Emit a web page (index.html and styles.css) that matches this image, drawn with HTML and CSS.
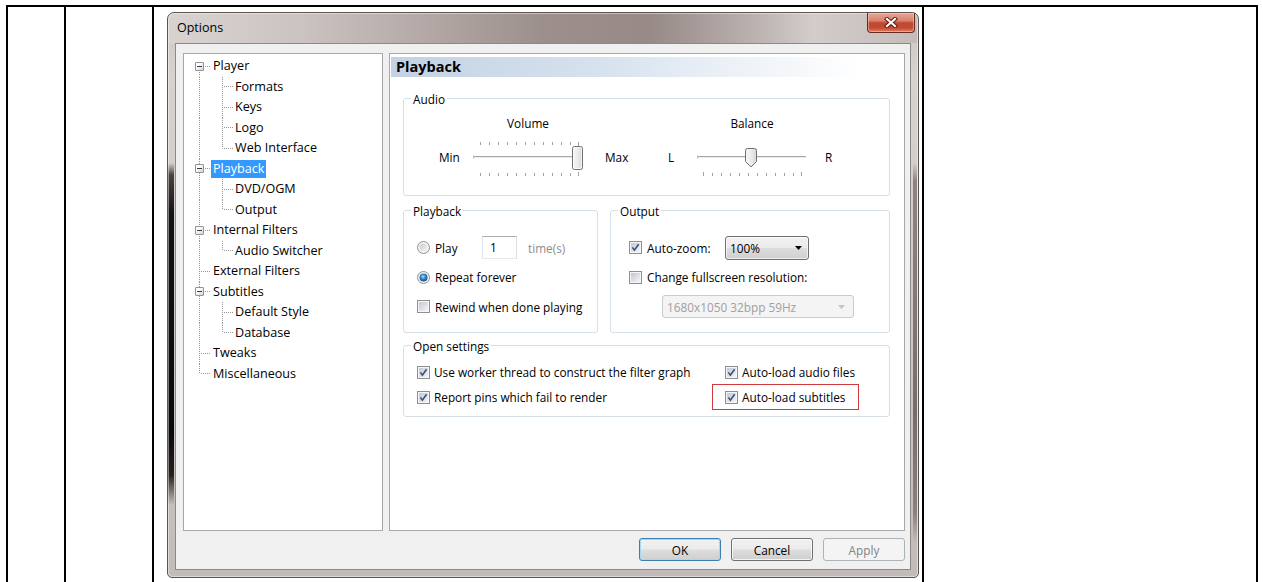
FILE: index.html
```html
<!DOCTYPE html>
<html lang="en">
<head>
<meta charset="utf-8">
<title>Options</title>
<link rel="stylesheet" href="styles.css">
</head>
<body>
<svg class="defs" width="0" height="0" aria-hidden="true">
  <defs>
    <linearGradient id="chkIn" x1="0" y1="0" x2="1" y2="1">
      <stop offset="0" stop-color="#c3c8d1"/>
      <stop offset="1" stop-color="#f4f5f7"/>
    </linearGradient>
    <linearGradient id="radIn" x1="0" y1="0" x2="1" y2="1">
      <stop offset="0" stop-color="#c9cbce"/>
      <stop offset="1" stop-color="#f6f6f6"/>
    </linearGradient>
    <radialGradient id="radDot" cx="0.45" cy="0.4" r="0.6">
      <stop offset="0" stop-color="#a9def9"/>
      <stop offset="0.55" stop-color="#2d7fc4"/>
      <stop offset="1" stop-color="#154c88"/>
    </radialGradient>
    <linearGradient id="thumbFill" x1="0" y1="0" x2="1" y2="0">
      <stop offset="0" stop-color="#f7f7f7"/>
      <stop offset="0.5" stop-color="#ececec"/>
      <stop offset="1" stop-color="#d6d6d6"/>
    </linearGradient>
  </defs>
</svg>

<table class="sheet">
  <tr>
    <td class="c1"></td>
    <td class="c2"></td>
    <td class="c3">
      <div class="window">
        <div class="titlebar">
          <span class="title">Options</span>
          <span class="close">
            <svg width="14" height="11" viewBox="0 0 14 11">
              <path d="M3 2L11 9M11 2L3 9" stroke="#5a1d12" stroke-width="4.2" stroke-linecap="square"/>
              <path d="M3 2L11 9M11 2L3 9" stroke="#fff" stroke-width="2.2" stroke-linecap="square"/>
            </svg>
          </span>
        </div>

        <div class="client">
          <div class="panes">
            <div class="tree">
              <div class="node"><span class="g0 exp first"><span class="box"></span></span><span class="lbl">Player</span></div>
              <div class="node"><span class="g0 pass"></span><span class="g1 tee"></span><span class="lbl">Formats</span></div>
              <div class="node"><span class="g0 pass"></span><span class="g1 tee"></span><span class="lbl">Keys</span></div>
              <div class="node"><span class="g0 pass"></span><span class="g1 tee"></span><span class="lbl">Logo</span></div>
              <div class="node"><span class="g0 pass"></span><span class="g1 last"></span><span class="lbl">Web Interface</span></div>
              <div class="node"><span class="g0 exp"><span class="box"></span></span><span class="lbl sel">Playback</span></div>
              <div class="node"><span class="g0 pass"></span><span class="g1 tee"></span><span class="lbl">DVD/OGM</span></div>
              <div class="node"><span class="g0 pass"></span><span class="g1 last"></span><span class="lbl">Output</span></div>
              <div class="node"><span class="g0 exp"><span class="box"></span></span><span class="lbl">Internal Filters</span></div>
              <div class="node"><span class="g0 pass"></span><span class="g1 last"></span><span class="lbl">Audio Switcher</span></div>
              <div class="node"><span class="g0 tee"></span><span class="lbl">External Filters</span></div>
              <div class="node"><span class="g0 exp"><span class="box"></span></span><span class="lbl">Subtitles</span></div>
              <div class="node"><span class="g0 pass"></span><span class="g1 tee"></span><span class="lbl">Default Style</span></div>
              <div class="node"><span class="g0 pass"></span><span class="g1 last"></span><span class="lbl">Database</span></div>
              <div class="node"><span class="g0 tee"></span><span class="lbl">Tweaks</span></div>
              <div class="node"><span class="g0 last"></span><span class="lbl">Miscellaneous</span></div>
            </div>

            <div class="page">
              <div class="page-head">Playback</div>

              <div class="group audio">
                <div class="group-title">Audio</div>
                <div class="audio-body">
                  <span class="ah vol">Volume</span>
                  <span class="ah bal">Balance</span>
                  <span class="at at-min">Min</span>
                  <svg class="slider s-vol" width="110" height="40" viewBox="0 0 110 40">
                    <g stroke="#a3a3a3" stroke-width="1">
                      <path d="M7.5 5v3M16.5 5v3M25.5 5v3M34.5 5v3M43.5 5v3M52.5 5v3M61.5 5v3M70.5 5v3M79.5 5v3M88.5 5v3M97.5 5v3M105.5 5v4"/>
                      <path d="M7.5 36v3M16.5 36v3M25.5 36v3M34.5 36v3M43.5 36v3M52.5 36v3M61.5 36v3M70.5 36v3M79.5 36v3M88.5 36v3M97.5 36v3M105.5 35v4"/>
                    </g>
                    <path d="M0 19.5H104" stroke="#a9a9a9"/>
                    <path d="M0 20.5H104" stroke="#e9e9e9"/>
                    <path d="M0.5 18.5v3" stroke="#b5b5b5"/>
                    <rect x="99.5" y="9.5" width="10" height="23" rx="2" fill="url(#thumbFill)" stroke="#707070"/>
                    <rect x="100.5" y="10.5" width="8" height="21" rx="1" fill="none" stroke="#fff" stroke-opacity=".7"/>
                  </svg>
                  <span class="at at-max">Max</span>
                  <span class="at at-l">L</span>
                  <svg class="slider s-bal" width="110" height="40" viewBox="0 0 110 40">
                    <path d="M0 19.5H109" stroke="#a9a9a9"/>
                    <path d="M0 20.5H109" stroke="#e9e9e9"/>
                    <path d="M0.5 18.5v3" stroke="#b5b5b5"/>
                    <g stroke="#a3a3a3" stroke-width="1">
                      <path d="M6.5 35v4M15.5 36v3M24.5 36v3M33.5 36v3M42.5 36v3M51.5 36v3M60.5 36v3M69.5 36v3M78.5 36v3M87.5 36v3M96.5 36v3M104.5 35v4"/>
                    </g>
                    <path d="M48.5 13.5a2 2 0 0 1 2-2h7a2 2 0 0 1 2 2v11l-5.5 5.5l-5.5-5.5z" fill="url(#thumbFill)" stroke="#707070"/>
                  </svg>
                  <span class="at at-r">R</span>
                </div>
              </div>

              <div class="split">
                <div class="group pb">
                  <div class="group-title">Playback</div>
                  <div class="rows">
                    <div class="row">
                      <svg class="rad" width="13" height="13" viewBox="0 0 13 13"><circle cx="6.5" cy="6.5" r="6" fill="#f4f4f4" stroke="#8e8f8f"/><circle cx="6.5" cy="6.5" r="4" fill="url(#radIn)"/></svg>
                      <span class="play-lbl">Play</span>
                      <span class="num">1</span>
                      <span class="muted times">time(s)</span>
                    </div>
                    <div class="row">
                      <svg class="rad" width="13" height="13" viewBox="0 0 13 13"><circle cx="6.5" cy="6.5" r="6" fill="#f4f4f4" stroke="#8e8f8f"/><circle cx="6.5" cy="6.5" r="4" fill="url(#radDot)"/></svg>
                      <span>Repeat forever</span>
                    </div>
                    <div class="row">
                      <svg class="cb" width="13" height="13" viewBox="0 0 13 13"><rect x=".5" y=".5" width="12" height="12" fill="#f6f6f6" stroke="#8e8f8f"/><rect x="2" y="2" width="9" height="9" fill="url(#chkIn)"/></svg>
                      <span>Rewind when done playing</span>
                    </div>
                  </div>
                </div>

                <div class="group out">
                  <div class="group-title">Output</div>
                  <div class="rows">
                    <div class="row">
                      <svg class="cb" width="13" height="13" viewBox="0 0 13 13"><rect x=".5" y=".5" width="12" height="12" fill="#f6f6f6" stroke="#8e8f8f"/><rect x="2" y="2" width="9" height="9" fill="url(#chkIn)"/><path d="M3.4 6.4l2 2.8 4.2-6" fill="none" stroke="#3b4f82" stroke-width="1.6"/></svg>
                      <span class="zoom-lbl">Auto-zoom:</span>
                      <span class="combo">100%<svg width="7" height="4" viewBox="0 0 7 4"><path d="M0 0h7L3.5 4z" fill="#000"/></svg></span>
                    </div>
                    <div class="row">
                      <svg class="cb" width="13" height="13" viewBox="0 0 13 13"><rect x=".5" y=".5" width="12" height="12" fill="#f6f6f6" stroke="#8e8f8f"/><rect x="2" y="2" width="9" height="9" fill="url(#chkIn)"/></svg>
                      <span>Change fullscreen resolution:</span>
                    </div>
                    <div class="row">
                      <span class="combo off">1680x1050 32bpp 59Hz<svg width="7" height="4" viewBox="0 0 7 4"><path d="M0 0h7L3.5 4z" fill="#c4c4c4"/></svg></span>
                    </div>
                  </div>
                </div>
              </div>

              <div class="group open">
                <div class="group-title">Open settings</div>
                <div class="orows">
                  <div class="orow">
                    <span class="ocell">
                      <svg class="cb" width="13" height="13" viewBox="0 0 13 13"><rect x=".5" y=".5" width="12" height="12" fill="#f6f6f6" stroke="#8e8f8f"/><rect x="2" y="2" width="9" height="9" fill="url(#chkIn)"/><path d="M3.4 6.4l2 2.8 4.2-6" fill="none" stroke="#3b4f82" stroke-width="1.6"/></svg>
                      <span>Use worker thread to construct the filter graph</span>
                    </span>
                    <span class="ocell">
                      <svg class="cb" width="13" height="13" viewBox="0 0 13 13"><rect x=".5" y=".5" width="12" height="12" fill="#f6f6f6" stroke="#8e8f8f"/><rect x="2" y="2" width="9" height="9" fill="url(#chkIn)"/><path d="M3.4 6.4l2 2.8 4.2-6" fill="none" stroke="#3b4f82" stroke-width="1.6"/></svg>
                      <span>Auto-load audio files</span>
                    </span>
                  </div>
                  <div class="orow">
                    <span class="ocell">
                      <svg class="cb" width="13" height="13" viewBox="0 0 13 13"><rect x=".5" y=".5" width="12" height="12" fill="#f6f6f6" stroke="#8e8f8f"/><rect x="2" y="2" width="9" height="9" fill="url(#chkIn)"/><path d="M3.4 6.4l2 2.8 4.2-6" fill="none" stroke="#3b4f82" stroke-width="1.6"/></svg>
                      <span>Report pins which fail to render</span>
                    </span>
                    <span class="ocell mark">
                      <svg class="cb" width="13" height="13" viewBox="0 0 13 13"><rect x=".5" y=".5" width="12" height="12" fill="#f6f6f6" stroke="#8e8f8f"/><rect x="2" y="2" width="9" height="9" fill="url(#chkIn)"/><path d="M3.4 6.4l2 2.8 4.2-6" fill="none" stroke="#3b4f82" stroke-width="1.6"/></svg>
                      <span>Auto-load subtitles</span>
                    </span>
                  </div>
                </div>
              </div>
            </div>
          </div>

          <div class="buttons">
            <button class="btn default" type="button">OK</button>
            <button class="btn" type="button">Cancel</button>
            <button class="btn disabled" type="button" disabled>Apply</button>
          </div>
        </div>
      </div>
    </td>
    <td class="c4"></td>
  </tr>
</table>
</body>
</html>
```

FILE: styles.css
```css
html, body {
  margin: 0;
  padding: 0;
  background: #fff;
  overflow: hidden;
}

body {
  font-family: "Open Sans", "Noto Sans", "Liberation Sans", sans-serif;
  font-size: 11.8px;
  color: #000;
}

.defs {
  display: block;
  width: 0;
  height: 0;
  overflow: hidden;
}

/* outer layout table */
.sheet {
  border-collapse: separate;
  border-spacing: 0;
  table-layout: fixed;
  width: 1252px;
  margin: 5px 0 0 6px;
  border-top: 2px solid #000;
  border-left: 2px solid #000;
}

.sheet td {
  box-sizing: border-box;
  border-right: 2px solid #000;
  padding: 0;
  height: 575px;
  vertical-align: top;
}

.c1 { width: 58px; }
.c2 { width: 88px; }
.c3 { width: 770px; padding: 5px 0 0 13px !important; }
.c4 { width: 334px; }

/* dialog window frame */
.window {
  width: 752px;
  height: 566px;
  box-sizing: border-box;
  border: 1px solid #5d5452;
  border-radius: 7px 7px 5px 5px;
  padding: 0 7px 7px;
  display: flex;
  flex-direction: column;
  box-shadow: inset 0 0 0 1px rgba(255, 255, 255, .45);
  background:
    linear-gradient(to bottom, rgba(40, 34, 34, 0) 150px, #4a4242 162px, #141414 200px, #0a0a0a 420px, #262020 462px, rgba(40, 34, 34, 0) 492px) left top / 6px 100% no-repeat,
    linear-gradient(to bottom, rgba(130, 120, 118, 0) 150px, #8e8482 168px, #776c6a 400px, #8a807e 500px, rgba(130, 120, 118, 0) 530px) right 1px top / 4px 100% no-repeat,
    linear-gradient(to right, #d8d3d1 0%, #cbc3c1 18%, #b4a9a6 34%, #9c8f8c 50%, #968986 64%, #b5aba9 76%, #d2ccca 86%, #c4bcba 100%) left top / 100% 30px no-repeat,
    linear-gradient(to bottom, #cbc4c2 0, #d7d2d0 60px, #cfc9c7 300px, #c2bbb9 100%);
}

.titlebar {
  height: 30px;
  flex: none;
  display: flex;
  justify-content: space-between;
  align-items: flex-start;
}

.title {
  margin-left: 2px;
  line-height: 30px;
  font-size: 12.5px;
  color: #000;
}

.close {
  width: 48px;
  height: 20px;
  box-sizing: border-box;
  margin-right: -4px;
  border: 1px solid #6b2a20;
  border-top: none;
  border-radius: 0 0 4px 4px;
  display: flex;
  align-items: center;
  justify-content: center;
  background: linear-gradient(to bottom, #e6a595 0%, #d88470 40%, #c4472f 52%, #c34a31 78%, #d9826a 100%);
  box-shadow: inset 0 0 0 1px rgba(255, 220, 210, .45);
}

/* client area */
.client {
  flex: 1;
  border: 1px solid #8f8986;
  background: #f0f0f0;
  padding: 9px 5px 8px 7px;
  display: flex;
  flex-direction: column;
  gap: 7px;
}

.panes {
  display: flex;
  gap: 6px;
  height: 478px;
}

/* tree */
.tree {
  width: 200px;
  flex: none;
  box-sizing: border-box;
  border: 1px solid #a7a7a7;
  background: #fff;
  padding-top: 2px;
  font-size: 12.6px;
  --vd: repeating-linear-gradient(to bottom, #959595 0 1px, transparent 1px 2px);
  --hd: repeating-linear-gradient(to right, #959595 0 1px, transparent 1px 2px);
}

.node {
  display: flex;
  align-items: center;
  height: 20.5px;
}

.g0, .g1 {
  flex: none;
  align-self: stretch;
  background-repeat: no-repeat;
}

.g0 {
  width: 27px;
  display: flex;
  align-items: center;
}

.g1 { width: 22px; }

.g0.pass { background-image: var(--vd); background-size: 1px 100%; background-position: 15px 0; }
.g0.tee {
  background-image: var(--vd), var(--hd);
  background-size: 1px 100%, 10px 1px;
  background-position: 15px 0, 17px 50%;
}
.g0.last {
  background-image: var(--vd), var(--hd);
  background-size: 1px 50%, 10px 1px;
  background-position: 15px 0, 17px 50%;
}
.g0.exp {
  background-image: var(--vd), var(--hd);
  background-size: 1px 100%, 6px 1px;
  background-position: 15px 0, 21px 50%;
}
.g0.exp.first {
  background-size: 1px 50%, 6px 1px;
  background-position: 15px 100%, 21px 50%;
}

.g1.tee {
  background-image: var(--vd), var(--hd);
  background-size: 1px 100%, 9px 1px;
  background-position: 11px 0, 13px 50%;
}
.g1.last {
  background-image: var(--vd), var(--hd);
  background-size: 1px 50%, 9px 1px;
  background-position: 11px 0, 13px 50%;
}

.box {
  width: 9px;
  height: 9px;
  box-sizing: border-box;
  margin-left: 11px;
  border: 1px solid #939393;
  border-radius: 1px;
  background: linear-gradient(135deg, #ffffff 30%, #d4d4d4 100%);
  display: flex;
  align-items: center;
  justify-content: center;
}

.box::after {
  content: "";
  width: 5px;
  height: 1px;
  background: #2b3d5a;
}

.lbl {
  padding: 0 2px;
  line-height: 18px;
  white-space: nowrap;
}

.lbl.sel {
  background: #3399ff;
  color: #fff;
}

/* settings page */
.page {
  flex: 1;
  box-sizing: border-box;
  border: 1px solid #a7a7a7;
  background: #fff;
}

.page-head {
  margin: 3px 4px 0 1px;
  height: 20px;
  line-height: 20px;
  padding-left: 5px;
  font-weight: bold;
  font-size: 14.5px;
  background: linear-gradient(to right, #c2d2e4 0%, #d6e1ee 40%, #eef3f8 70%, #ffffff 92%);
}

.group {
  border: 1px solid #d5dfe5;
  border-radius: 3px;
}

.group-title {
  display: table;
  margin: -8px 0 0 7px;
  padding: 0 2px;
  line-height: 16px;
  background: #fff;
}

.audio {
  margin: 21px 14px 0 13px;
  padding-bottom: 18px;
}

.audio-body {
  display: grid;
  grid-template-columns: 35px 34px 110px 85px 29px 110px 1fr;
  grid-template-rows: 16px 40px;
  row-gap: 6px;
  margin-top: 8px;
}

.ah {
  grid-row: 1;
  line-height: 16px;
  text-align: center;
}
.ah.vol { grid-column: 3; }
.ah.bal { grid-column: 6; }

.at {
  grid-row: 2;
  align-self: center;
  line-height: 16px;
}
.at-min { grid-column: 2; }
.at-max { grid-column: 4; padding-left: 22px; }
.at-l { grid-column: 5; }
.at-r { grid-column: 7; padding-left: 18px; }

.slider { display: block; grid-row: 2; }
.s-vol { grid-column: 3; }
.s-bal { grid-column: 6; }

.split {
  display: flex;
  gap: 12px;
  margin: 14px 14px 0 13px;
}

.pb, .out {
  height: 123px;
  box-sizing: border-box;
}

.pb { width: 195px; flex: none; }
.out { flex: 1; }

.rows {
  display: flex;
  flex-direction: column;
  gap: 6.5px;
  margin-top: 17px;
  padding-left: 13px;
}

.out .rows { padding-left: 18px; }

.row {
  display: flex;
  align-items: center;
  height: 23px;
  white-space: nowrap;
}

.rad, .cb {
  flex: none;
  display: block;
  margin-right: 5px;
}

.play-lbl { width: 47px; }

.num {
  width: 35px;
  height: 23px;
  box-sizing: border-box;
  border: 1px solid #abadb3;
  border-color: #abadb3 #dbdfe6 #e3e9ef #e2e3ea;
  background: #fff;
  padding-left: 7px;
  line-height: 21px;
}

.muted { color: #8d8d8d; }
.times { margin-left: 11px; }

.zoom-lbl { width: 78px; }

.combo {
  width: 84px;
  height: 24px;
  box-sizing: border-box;
  border: 1px solid #707070;
  border-radius: 3px;
  padding: 0 6px 0 4px;
  display: flex;
  align-items: center;
  justify-content: space-between;
  background: linear-gradient(to bottom, #f2f2f2 0%, #ebebeb 48%, #dddddd 52%, #cfcfcf 100%);
  box-shadow: inset 0 0 0 1px rgba(255, 255, 255, .65);
}

.combo.off {
  width: 192px;
  height: 23px;
  margin-left: 33px;
  border-color: #c9cbcd;
  background: #f4f4f4;
  box-shadow: none;
  color: #a0a0a0;
  padding-right: 8px;
}

.open {
  margin: 12px 14px 0 13px;
  height: 72px;
  box-sizing: border-box;
}

.orows {
  display: flex;
  flex-direction: column;
  gap: 7px;
  margin-top: 9px;
  padding-left: 13px;
}

.orow {
  display: flex;
  align-items: center;
  height: 18px;
}

.ocell {
  display: flex;
  align-items: center;
  white-space: nowrap;
}

.ocell:first-child { width: 308px; }

.ocell .cb { margin-right: 4px; }

.mark {
  width: 147px;
  box-sizing: border-box;
  margin: -5px 0 -5px -13px;
  padding: 4px 0 4px 12px;
  border: 1px solid #d2393c;
}

/* dialog buttons */
.buttons {
  display: flex;
  justify-content: flex-end;
  gap: 10px;
  height: 23px;
}

.btn {
  appearance: none;
  width: 82px;
  height: 23px;
  box-sizing: border-box;
  margin: 0;
  padding: 0;
  font: inherit;
  color: #000;
  border: 1px solid #707070;
  border-radius: 3px;
  background: linear-gradient(to bottom, #f2f2f2 0%, #ebebeb 48%, #dddddd 52%, #cfcfcf 100%);
  box-shadow: inset 0 0 0 1px rgba(255, 255, 255, .7);
}

.btn.default {
  border-color: #3c7fb1;
  box-shadow: inset 0 0 0 1px #a7d7f3;
}

.btn.disabled {
  border-color: #adb2b5;
  background: #f4f4f4;
  color: #838383;
  box-shadow: none;
}
```
